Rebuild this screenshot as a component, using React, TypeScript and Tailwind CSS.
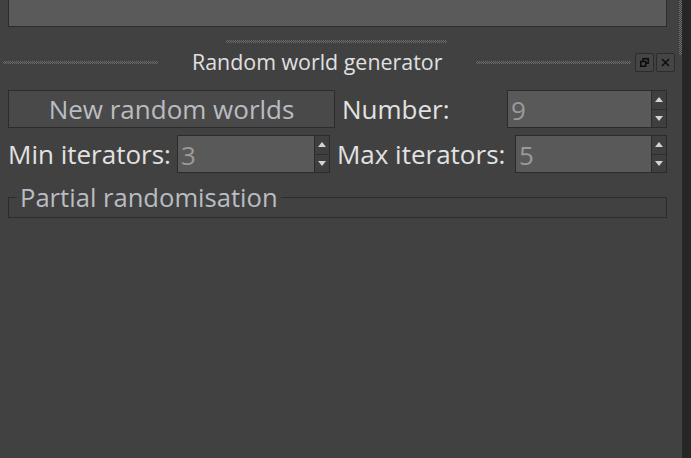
import React from "react";

const Dots = ({ className }: { className: string }) => (
  <div
    className={
      "h-[3px] bg-[conic-gradient(#6c6c6c_25%,transparent_0_50%,#6c6c6c_0_75%,transparent_0)] bg-[length:2px_2px] " +
      className
    }
  />
);

const Spin = ({ value, w }: { value: string; w: string }) => (
  <div className={"flex h-[38px] shrink-0 border border-[#2b2b2b] " + w}>
    <div className="flex-1 bg-[#595959] pl-[3px] pt-[1px] text-[26px] leading-[36px] text-[#9a9a9a]">{value}</div>
    <div className="flex w-[15px] flex-col border-l border-[#2b2b2b] bg-[#3f3f3f]">
      <div className="flex flex-1 items-center justify-center border-b border-[#2f2f2f]">
        <div className="h-0 w-0 border-x-[4px] border-b-[5px] border-x-transparent border-b-[#d4d4d4]" />
      </div>
      <div className="flex flex-1 items-center justify-center">
        <div className="h-0 w-0 border-x-[4px] border-t-[5px] border-x-transparent border-t-[#d4d4d4]" />
      </div>
    </div>
  </div>
);

export default function App() {
  return (
    <div className="flex h-[458px] w-[691px] overflow-hidden bg-[#414141] font-['Open_Sans',sans-serif] text-[#e2e2e2]">
      <div className="flex w-[682px] flex-col">
        <div className="ml-2 mr-[15px] h-[27px] border border-t-0 border-[#2c2c2c] bg-[#5a5a5a]" />
        <div className="flex h-[62px] flex-col">
          <Dots className="ml-[226px] mt-[13px] w-[221px]" />
          <div className="mt-[8px] flex h-[22px] items-center">
            <Dots className="ml-[3px] w-[155px] shrink-0" />
            <div className="ml-[34px] w-[250px] shrink-0 whitespace-nowrap text-[21.4px] leading-[22px] text-[#e0e0e0]">
              Random world generator
            </div>
            <Dots className="ml-[34px] w-[155px] shrink-0" />
            <div className="ml-[4px] flex h-[19px] w-[19px] shrink-0 items-center justify-center rounded-[2px] border border-[#2c2c2c] bg-[#454545]">
              <svg width="9" height="9" viewBox="0 0 9 9">
                <rect x="3" y="0.75" width="5.25" height="4.5" fill="none" stroke="#0c0c0c" strokeWidth="1.5" />
                <rect x="0.75" y="3.5" width="5" height="4.75" fill="#454545" stroke="#0c0c0c" strokeWidth="1.5" />
              </svg>
            </div>
            <div className="ml-[2px] flex h-[19px] w-[19px] shrink-0 items-center justify-center rounded-[2px] border border-[#2c2c2c] bg-[#454545]">
              <svg width="9" height="9" viewBox="0 0 9 9">
                <path d="M1 1L8 8M8 1L1 8" stroke="#0c0c0c" strokeWidth="1.5" />
              </svg>
            </div>
          </div>
        </div>
        <div className="ml-2 mr-[15px] mt-[1px] flex h-[38px] items-center">
          <div className="flex h-[38px] w-[327px] shrink-0 items-center justify-center border border-[#2c2c2c] bg-[#494949] pt-[1px] text-[26px] text-[#b9bdc1]">
            New random worlds
          </div>
          <div className="ml-[7px] flex-1 pt-[1px] text-[26px]">Number:</div>
          <Spin value="9" w="w-[160px]" />
        </div>
        <div className="ml-2 mr-[15px] mt-[7px] flex h-[38px] items-center">
          <div className="whitespace-nowrap pt-[1px] text-[26px]">Min iterators:</div>
          <Spin value="3" w="w-[153px] ml-[6px]" />
          <div className="ml-[7px] whitespace-nowrap pt-[1px] text-[26px]">Max iterators:</div>
          <Spin value="5" w="w-[152px] ml-auto" />
        </div>
        <div className="relative ml-2 mr-[15px] mt-[24px] h-[21px] border border-[#2c2c2c]">
          <div className="absolute left-[8px] top-[-15px] bg-[#414141] px-[3px] text-[25.6px] leading-[30px] text-[#b9bdc1]">
            Partial randomisation
          </div>
        </div>
      </div>
      <div className="relative flex-1 bg-[#262626]">
        <div className="absolute left-[-3px] top-0 h-[55px] w-[3px] bg-[conic-gradient(#6c6c6c_25%,transparent_0_50%,#6c6c6c_0_75%,transparent_0)] bg-[length:2px_2px]" />
      </div>
    </div>
  );
}
